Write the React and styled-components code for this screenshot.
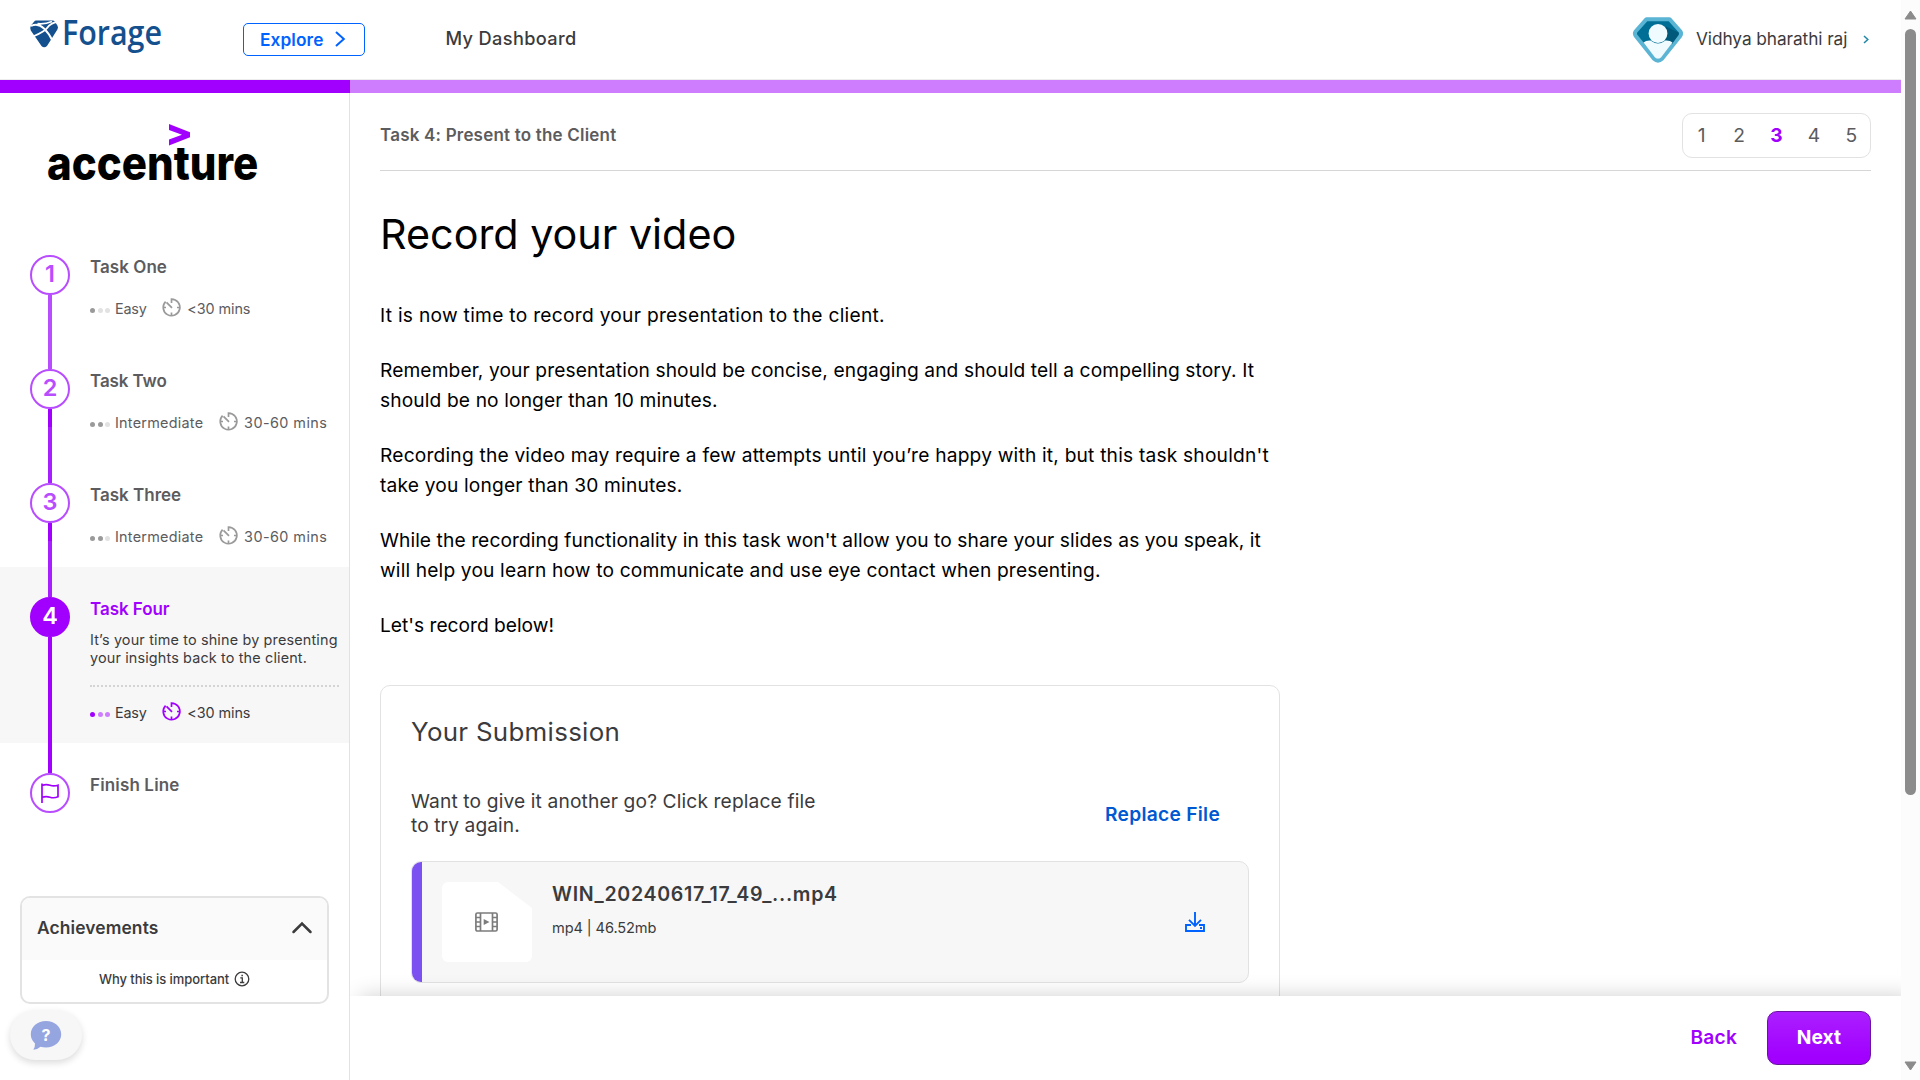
import React from 'react';
import styled, { createGlobalStyle, css } from 'styled-components';

const purple = '#a100ff';
const purpleSoft = '#b84dff';
const border = '#e2e2e2';
const ink = '#3b3b3d';
const grey = '#5c5c5e';

const Global = createGlobalStyle`
  *, *::before, *::after { box-sizing: border-box; }
  body {
    margin: 0;
    background: #fff;
    color: #000;
    font-family: Inter, "Liberation Sans", sans-serif;
    overflow: hidden;
  }
  svg { display: block; flex: none; overflow: visible; }
  p, h1, h2 { margin: 0; font-weight: 400; }
  button { font-family: inherit; padding: 0; background: none; border: 0; }
`;

const tracking = css`letter-spacing: ${p => p.$ls || 0}px; white-space: nowrap;`;

/* ---------- shell ---------- */
const Window = styled.div`display: flex; width: 1920px; height: 1080px; overflow: hidden;`;
const Page = styled.div`display: flex; flex-direction: column; width: 1901px; position: relative;`;
const Body = styled.div`display: flex; flex: 1; min-height: 0;`;

const Scrollbar = styled.div`
  display: flex; flex-direction: column; align-items: center;
  width: 19px; padding: 10px 0 9px; background: #fcfcfc;
`;
const Thumb = styled.div`width: 11px; height: 766px; margin: 9px 0 auto; border-radius: 6px; background: #8b8b8b;`;

/* ---------- header ---------- */
const Header = styled.header`
  display: flex; align-items: center; height: 80px; padding: 0 32px 0 29px;
  border-bottom: 1px solid #ececec;
`;
const ForageMark = styled.div`display: flex; align-items: center; width: 137px; height: 60px;`;
const ForageWord = styled.span`
  width: 101px; margin: -16px 0 0 3px; color: #144f8e;
  font-family: "Open Sans", sans-serif; font-size: 35px; font-weight: 600; line-height: 50px;
  white-space: nowrap; transform: scaleX(0.87); transform-origin: left;
`;
const ExploreButton = styled.button`
  display: flex; align-items: center; justify-content: space-between;
  width: 122px; height: 33px; margin-left: 77px; padding: 0 19px 1px 16px;
  border: 1px solid #0062ff; border-radius: 5px;
  color: #0062ff; font-size: 17.3px; font-weight: 600; ${tracking}
`;
const NavLink = styled.span`
  margin: -4px auto 0 80.5px; color: ${ink}; font-size: 18.2px; font-weight: 500; ${tracking}
`;
const Account = styled.div`display: flex; align-items: center; color: ${ink}; font-size: 17.3px;`;
const AccountName = styled.span`width: 151px; margin: -3px 16px 0 13px; ${tracking}`;

const Progress = styled.div`height: 13px; background: #cf7dff;`;
const ProgressFill = styled.div`width: 350px; height: 13px; background: ${purple};`;

/* ---------- sidebar ---------- */
const Sidebar = styled.aside`width: 350px; border-right: 1px solid ${border};`;
const Brand = styled.div`display: flex; flex-direction: column; align-items: flex-start; height: 132px; padding: 31px 0 0 47px;`;
const BrandWord = styled.span`
  margin-top: -12.5px; color: #000; font-size: 47px; font-weight: 800; line-height: 57px;
  white-space: nowrap; transform: scaleX(0.895); transform-origin: left;
`;
const Task = styled.div`
  display: flex; height: ${p => p.$height}px; background: ${p => (p.$active ? '#f7f7f7' : 'transparent')};
`;
const Rail = styled.div`display: flex; flex-direction: column; align-items: center; width: 40px; margin-left: 30px;`;
const LineIn = styled.div`width: 4px; height: 30px; flex: none; background: ${p => p.$tone};`;
const LineOut = styled.div`width: 4px; flex: 1; background: ${p => p.$tone};`;
const Badge = styled.div`
  display: flex; align-items: center; justify-content: center; flex: none;
  width: 40px; height: 40px; border-radius: 50%; padding-bottom: ${p => (p.$icon ? 1 : 3)}px;
  border: 2px solid ${p => (p.$active ? purple : purpleSoft)};
  background: ${p => (p.$active ? purple : '#fff')};
  color: ${p => (p.$active ? '#fff' : purpleSoft)};
  font-size: 23.5px; font-weight: 600;
`;
const TaskBody = styled.div`width: 249px; margin-left: 20px; padding-top: 32px;`;
const TaskTitle = styled.div`
  color: ${p => (p.$active ? purple : grey)}; font-size: 17px; font-weight: 600; line-height: 20px; ${tracking}
`;
const TaskText = styled.div`
  margin-top: 12px; padding-bottom: 18px; border-bottom: 2px dotted #d4d4d4;
  color: ${ink}; font-size: 14.4px; line-height: 18px;
`;
const Line = styled.span`display: block; ${tracking}`;
const Meta = styled.div`
  display: flex; align-items: center; height: 20px; margin-top: ${p => (p.$active ? 16 : 22)}px;
  color: ${p => (p.$active ? ink : grey)}; font-size: 14.4px; line-height: 20px;
`;
const Dots = styled.span`display: flex; gap: 2.5px; margin: 3px 5px 0 0;`;
const Dot = styled.i`width: 5px; height: 5px; border-radius: 50%; background: ${p => p.$tone};`;
const Level = styled.span`width: ${p => p.$w}px; margin-right: 15.6px; ${tracking}`;
const Duration = styled.span`margin-left: 6px; ${tracking}`;
const ClockBox = styled.span`margin-bottom: 4px; color: ${p => (p.$active ? purple : '#9a9a9a')};`;

const Achievements = styled.section`
  width: 309px; height: 108px; margin-left: 20px; overflow: hidden;
  border: 2px solid #e3e3e3; border-radius: 10px;
`;
const AchievementsHead = styled.div`
  display: flex; align-items: center; justify-content: space-between; height: 62px; padding: 0 15px 4px 15px;
  background: #fafafa; color: ${ink}; font-size: 17.4px; font-weight: 600; ${tracking}
`;
const AchievementsNote = styled.div`
  display: flex; align-items: center; justify-content: center; gap: 5px; height: 41px; padding: 0 0 3px 0;
  color: ${ink}; font-size: 13px; font-weight: 500; ${tracking}
`;
const HelpBubble = styled.button`
  position: absolute; left: 9.5px; top: 1010px; width: 72px; height: 50px;
  display: flex; align-items: center; justify-content: center;
  border-radius: 25px; background: #f7f7f7; box-shadow: 0 3px 7px rgba(0, 0, 0, 0.14);
`;

/* ---------- content ---------- */
const Content = styled.main`display: flex; flex-direction: column; flex: 1; overflow: hidden;`;
const Scroll = styled.div`height: 903px; padding: 0 30px; overflow: hidden;`;
const TopBar = styled.div`
  display: flex; align-items: center; justify-content: space-between;
  height: 78px; padding: 7px 0 0; border-bottom: 1px solid #d6d6d6;
`;
const Crumb = styled.div`color: ${grey}; font-size: 17px; font-weight: 600; ${tracking}`;
const Pager = styled.div`
  display: flex; width: 189px; height: 45px; border: 1px solid ${border}; border-radius: 10px;
`;
const PageNo = styled.span`
  flex: 1; text-align: center; line-height: 43px; font-size: 19.2px;
  color: ${p => (p.$current ? purple : grey)}; font-weight: ${p => (p.$current ? 700 : 400)};
`;
const Title = styled.h1`margin-top: 38px; font-size: 41.3px; line-height: 50px; ${tracking}`;
const Article = styled.div`
  display: flex; flex-direction: column; gap: 25px; margin-top: 41px; font-size: 19.2px; line-height: 30px;
`;
const Card = styled.section`
  width: 900px; height: 400px; margin-top: 45px; padding: 29.6px 30px 0;
  border: 1px solid ${border}; border-radius: 10px; color: ${ink};
`;
const CardTitle = styled.h2`font-size: 25.9px; line-height: 32px; ${tracking}`;
const Retry = styled.div`
  display: flex; align-items: center; justify-content: space-between;
  margin: 41px 0 24.4px; padding: 0 29px 0 0; font-size: 19.2px; line-height: 24px;
`;
const ReplaceLink = styled.span`padding-top: 2px; color: #0059d1; font-weight: 600; ${tracking}`;
const FileRow = styled.div`
  display: flex; height: 122px; overflow: hidden; border: 1px solid ${border}; border-radius: 10px; background: #f7f7f7;
`;
const FileAccent = styled.div`width: 10px; background: #7b52f1;`;
const Paper = styled.div`
  display: flex; align-items: center; justify-content: center; width: 90px; height: 80px; margin: 20px 20px 0;
  padding-right: 2px; background: #fff; border-radius: 6px;
  clip-path: polygon(0 0, 56px 0, 90px 26px, 90px 100%, 0 100%);
`;
const FileInfo = styled.div`flex: 1; padding-top: 19px;`;
const FileName = styled.div`font-size: 19.6px; font-weight: 600; line-height: 26px; ${tracking}`;
const FileMeta = styled.div`margin-top: 11px; font-size: 14.6px; line-height: 20px; ${tracking}`;
const Download = styled.span`display: flex; align-items: center; margin-right: 43px;`;

const Footer = styled.footer`
  position: relative; display: flex; align-items: center; justify-content: flex-end; gap: 30px;
  height: 84px; padding-right: 30px; background: #fff; box-shadow: 10px 0 20px rgba(0, 0, 0, 0.19);
`;
const BackButton = styled.button`margin-top: -3px; color: ${purple}; font-size: 19.2px; font-weight: 600; ${tracking}`;
const NextButton = styled.button`
  width: 104px; height: 54px; padding-bottom: 3px; border: 1px solid #6b14a0; border-radius: 10px;
  background: linear-gradient(#ab1fff, ${purple} 85%);
  color: #fff; font-size: 19.2px; font-weight: 700; ${tracking}
`;

/* ---------- drawings ---------- */
const ForageLogo = () => (
  <ForageMark>
    <svg width="30" height="54" viewBox="0 0 30 54">
      <g transform="translate(0 1.500)">
        <path d="M7 6H23.500Q25 6 26 7.200L28.400 11Q29.600 12.800 28.400 15L18 31.500Q15 34 12.500 31.500L1.800 16Q.6 13.500 2 11L5 7.200Q6 6 7 6Z" fill="#144f8e" />
        <path d="M2 11.500Q9 8 15 14T23.500 26.500M4 22Q16 17 18.500 13T29 7.200M8.500 9.200Q16 10 23 7" fill="none" stroke="#fff" strokeWidth="1.800" />
      </g>
    </svg>
    <ForageWord>Forage</ForageWord>
  </ForageMark>
);

const AccentureLogo = () => (
  <>
    <svg width="210" height="22" viewBox="0 0 210 22">
      <path d="M122 0L143 8.300V13.200L122 21.500V15.500L135 10.700L122 6Z" fill={purple} />
    </svg>
    <BrandWord>accenture</BrandWord>
  </>
);

const Avatar = () => (
  <svg width="50" height="46" viewBox="0 0 50 46">
    <path d="M13.500 2.200H36.500L47.500 14.500Q48.800 16.800 47.200 19L29 41.800Q25 45.500 21 41.800L2.800 19Q1.200 16.800 2.500 14.500Z" fill="#006f96" stroke="#5ab4d3" strokeWidth="4" strokeLinejoin="round" />
    <path d="M33 9.500L45.500 15.500V18L39 27L30 21Z" fill="#00587a" />
    <path d="M10.500 25.500Q13 23.300 17.500 23.600Q25 29.500 32.500 23.600Q37 23.300 39.500 25.500L28 40.400Q25 43 22 40.400Z" fill="#f0fbff" />
    <circle cx="25" cy="16.500" r="9.400" fill="#f0fbff" />
  </svg>
);

const Chevron = ({ w, h, stroke, color }) => (
  <svg width={w} height={h} viewBox={`0 0 ${w} ${h}`}>
    <path d={`M1 1L${w - 1.200} ${h / 2}L1 ${h - 1}`} fill="none" stroke={color} strokeWidth={stroke} />
  </svg>
);

const Clock = () => (
  <svg width="19" height="19" viewBox="0 0 19 19" fill="none" stroke="currentColor" strokeWidth="1.700">
    <path d="M9.500 5V1.100A8.300 8.300 0 1 1 3.600 3.600" />
    <path d="M4.500 4.300L10 9.800M1.200 9.500H4M15 9.500H17.800M9.500 14.500V17.500" />
  </svg>
);

const Flag = () => (
  <svg width="20" height="22" viewBox="0 0 20 22" fill="none" stroke={purple} strokeWidth="1.700">
    <path d="M2 1.500V21M2 3.500Q6 2 10 3.300T18 3.200V14.800Q14 16.500 10 15.200T2 15.300" />
  </svg>
);

const Info = () => (
  <svg width="16" height="16" viewBox="0 0 16 16" fill="none" stroke={ink} strokeWidth="1.300">
    <circle cx="8" cy="8" r="6.800" />
    <path d="M6.300 6.800H8.300V11.300M6 11.500H10.300M7.400 4.500H8.900" />
  </svg>
);

const Film = () => (
  <svg width="23" height="20" viewBox="0 0 23 20" fill="none" stroke="#7c7c7c" strokeWidth="1.700">
    <rect x=".9" y="1" width="21.200" height="18" rx="1.500" />
    <path d="M5.500 1V19M17.500 1V19M1 5.500H5.500M1 10H5.500M1 14.500H5.500M17.500 5.500H22M17.500 10H22M17.500 14.500H22" />
    <path d="M8.700 7L14.500 10L8.700 13Z" fill="#7c7c7c" stroke="none" />
  </svg>
);

const DownloadIcon = () => (
  <svg width="20" height="20" viewBox="0 0 20 20" fill="none" stroke="#0062ff">
    <path d="M10 0V13.500M4 7.800L10 13.800L16 7.800" strokeWidth="1.900" />
    <path d="M6 13H1V19H19V13H14" strokeWidth="1.900" />
    <path d="M15 16H17" strokeWidth="1.800" />
  </svg>
);

const HelpIcon = () => (
  <svg width="32" height="30" viewBox="0 0 32 30">
    <path d="M16 1C24.500 1 31.200 6.800 31.200 14.300S24.500 27.500 16 27.500Q13 27.500 10.500 26.700Q7.500 29.600 3.300 29.700Q5.200 27.200 5 23.500Q.8 19.800 .8 14.300C.8 6.800 7.500 1 16 1Z" fill="#95a5e0" />
    <text x="16" y="20.500" textAnchor="middle" fill="#fff" fontFamily="Inter, sans-serif" fontWeight="700" fontSize="16">?</text>
  </svg>
);

/* ---------- data ---------- */
const fade = 'linear-gradient(#a100ff 18px, #a81fff 18px)';
const tasks = [
  { n: 1, title: 'Task One', ls: 0.05, level: 'Easy', lw: 31.7, lls: -0.2, time: '<30 mins', tls: -0.08, dots: 1, lineIn: 'transparent', lineOut: purpleSoft },
  { n: 2, title: 'Task Two', ls: -0.1, level: 'Intermediate', lw: 88.5, lls: 0.25, time: '30-60 mins', tls: 0.44, dots: 2, lineIn: purpleSoft, lineOut: fade },
  { n: 3, title: 'Task Three', ls: 0, level: 'Intermediate', lw: 88.5, lls: 0.25, time: '30-60 mins', tls: 0.44, dots: 2, lineIn: '#a81fff', lineOut: fade },
  { n: 4, title: 'Task Four', ls: -0.05, level: 'Easy', lw: 31.7, lls: -0.2, time: '<30 mins', tls: -0.08, dots: 1, lineIn: '#a81fff', lineOut: purple, active: true,
    text: [['It’s your time to shine by presenting', 0.165], ['your insights back to the client.', 0.15]] },
];
const article = [
  [['It is now time to record your presentation to the client.', 0.275]],
  [['Remember, your presentation should be concise, engaging and should tell a compelling story. It', 0.1], ['should be no longer than 10 minutes.', 0.121]],
  [["Recording the video may require a few attempts until you’re happy with it, but this task shouldn't", 0.19], ['take you longer than 30 minutes.', 0.17]],
  [["While the recording functionality in this task won't allow you to share your slides as you speak, it", 0.08], ['will help you learn how to communicate and use eye contact when presenting.', 0.15]],
  [["Let's record below!", -0.01]],
];

const Lines = ({ of }) => of.map(([text, ls]) => <Line key={text} $ls={ls}>{text}</Line>);

const TaskItem = ({ task: t }) => {
  const on = t.active ? purple : '#9a9a9a';
  const off = t.active ? '#cf7dff' : '#e2e2e2';
  return (
    <Task $height={t.active ? 176 : 114} $active={t.active}>
      <Rail>
        <LineIn $tone={t.lineIn} />
        <Badge $active={t.active}>{t.n}</Badge>
        <LineOut $tone={t.lineOut} />
      </Rail>
      <TaskBody>
        <TaskTitle $active={t.active} $ls={t.ls}>{t.title}</TaskTitle>
        {t.text && <TaskText><Lines of={t.text} /></TaskText>}
        <Meta $active={t.active}>
          <Dots>{[0, 1, 2].map(i => <Dot key={i} $tone={i < t.dots ? on : off} />)}</Dots>
          <Level $w={t.lw} $ls={t.lls}>{t.level}</Level>
          <ClockBox $active={t.active}><Clock /></ClockBox>
          <Duration $ls={t.tls}>{t.time}</Duration>
        </Meta>
      </TaskBody>
    </Task>
  );
};

export default function App() {
  return (
    <Window>
      <Global />
      <Page>
        <Header>
          <ForageLogo />
          <ExploreButton $ls={0.09}>Explore<Chevron w={10} h={16} stroke={2} color="#0062ff" /></ExploreButton>
          <NavLink $ls={0.36}>My Dashboard</NavLink>
          <Account>
            <Avatar />
            <AccountName $ls={-0.08}>Vidhya bharathi raj</AccountName>
            <Chevron w={6} h={9} stroke={1.5} color="#1f86a8" />
          </Account>
        </Header>
        <Progress><ProgressFill /></Progress>
        <Body>
          <Sidebar>
            <Brand><AccentureLogo /></Brand>
            {tasks.map(t => <TaskItem key={t.n} task={t} />)}
            <Task $height={153}>
              <Rail>
                <LineIn $tone={purple} />
                <Badge $icon><Flag /></Badge>
              </Rail>
              <TaskBody><TaskTitle $ls={0.15}>Finish Line</TaskTitle></TaskBody>
            </Task>
            <Achievements>
              <AchievementsHead $ls={0.12}>
                Achievements
                <svg width="20" height="13" viewBox="0 0 20 13"><path d="M1.500 11L10 2.500L18.500 11" fill="none" stroke={ink} strokeWidth="2.500" strokeLinecap="round" /></svg>
              </AchievementsHead>
              <AchievementsNote $ls={-0.06}>Why this is important <Info /></AchievementsNote>
            </Achievements>
          </Sidebar>
          <Content>
            <Scroll>
              <TopBar>
                <Crumb $ls={0.197}>Task 4: Present to the Client</Crumb>
                <Pager>{[1, 2, 3, 4, 5].map(n => <PageNo key={n} $current={n === 3}>{n}</PageNo>)}</Pager>
              </TopBar>
              <Title $ls={0}>Record your video</Title>
              <Article>{article.map((p, i) => <p key={i}><Lines of={p} /></p>)}</Article>
              <Card>
                <CardTitle $ls={0.3}>Your Submission</CardTitle>
                <Retry>
                  <p><Lines of={[['Want to give it another go? Click replace file', 0.13], ['to try again.', 0.08]]} /></p>
                  <ReplaceLink $ls={0.277}>Replace File</ReplaceLink>
                </Retry>
                <FileRow>
                  <FileAccent />
                  <Paper><Film /></Paper>
                  <FileInfo>
                    <FileName $ls={0.675}>WIN_20240617_17_49_...mp4</FileName>
                    <FileMeta $ls={-0.1}>mp4 | 46.52mb</FileMeta>
                  </FileInfo>
                  <Download><DownloadIcon /></Download>
                </FileRow>
              </Card>
            </Scroll>
            <Footer>
              <BackButton $ls={0.178}>Back</BackButton>
              <NextButton $ls={0.1}>Next</NextButton>
            </Footer>
          </Content>
        </Body>
        <HelpBubble><HelpIcon /></HelpBubble>
      </Page>
      <Scrollbar>
        <svg width="13" height="10" viewBox="0 0 13 10"><path d="M6.500 1L12 9H1Z" fill="#8b8b8b" stroke="#8b8b8b" strokeLinejoin="round" /></svg>
        <Thumb />
        <svg width="13" height="10" viewBox="0 0 13 10"><path d="M6.500 9L12 1H1Z" fill="#8b8b8b" stroke="#8b8b8b" strokeLinejoin="round" /></svg>
      </Scrollbar>
    </Window>
  );
}
